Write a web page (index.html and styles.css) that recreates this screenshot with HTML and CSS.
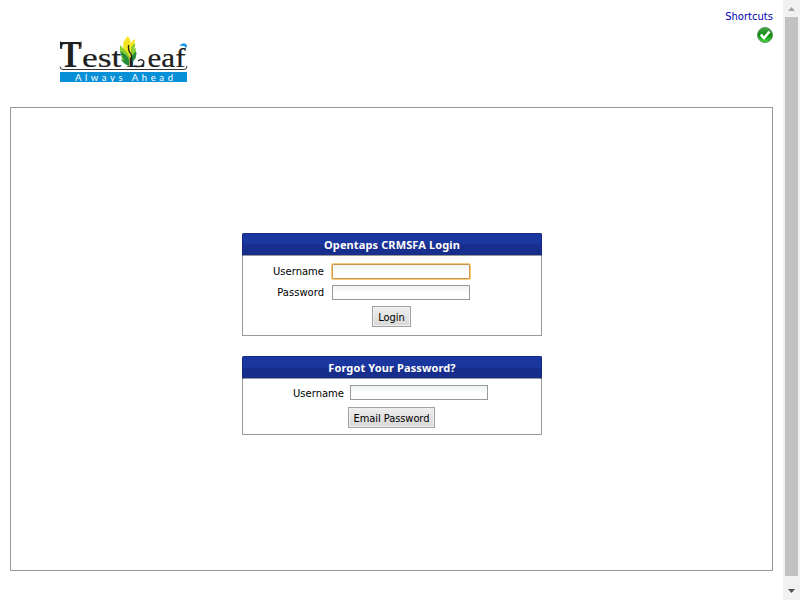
FILE: index.html
```html
<!DOCTYPE html>
<html lang="en">
<head>
<meta charset="utf-8">
<title>Opentaps CRMSFA Login</title>
<link rel="stylesheet" href="styles.css">
</head>
<body>
<div class="page">
  <header class="header">
    <svg class="logo" width="132" height="58" viewBox="58 28 132 58">
      <g class="wordmark">
        <text class="cap" x="60" y="67" textLength="21" lengthAdjust="spacingAndGlyphs">T</text>
        <text x="82" y="67" textLength="39.500" lengthAdjust="spacingAndGlyphs">est</text>
        <text class="ell" x="126" y="67" textLength="20" lengthAdjust="spacingAndGlyphs">L</text>
        <text x="147.500" y="67" textLength="38" lengthAdjust="spacingAndGlyphs">eaf</text>
      </g>
      <path d="M60 41V49L63 44ZM81.500 41V49L79 44Z" fill="#202020"/>
      <path d="M179.500 46Q182 42 186 44Q188 46 186 48Q185 45 179.500 46Z" fill="#1498e6"/>
      <path d="M60 66.500Q60 69.500 63 69.500H184Q187 69.500 187 66" fill="none" stroke="#333"/>
      <path d="M134 66Q143 68 144 62Q142 58 138 61" fill="none" stroke="#202020" stroke-width="1.300"/>
      <path d="M128 36Q121 42 124 50L131 58Q135 51 134 46L135 39Q131 41 130.500 44Q130.500 39 128 36Z" fill="#f4e522"/>
      <path d="M120 45Q119 52 123 56L121 55Q122 63 129 63Q131 56 126 51ZM131 47L135 43Q136 46 134 49L136 48Q136 55 131 60Z" fill="#8dcc2d"/>
      <path d="M120 51Q121 58 129 64Q130 59 126 55ZM136 51Q138 58 131 63L131 57ZM121 59Q123 64 129 66L129 62Z" fill="#238c38"/>
      <path d="M128.500 45Q128 51 131 54Q132.500 58 131 64" fill="none" stroke="#1c241e" stroke-width="1.300"/>
      <rect x="60" y="72" width="127" height="10" fill="#078fd8"/>
      <text class="tagline" x="75" y="80.700" textLength="98">Always Ahead</text>
    </svg>
    <div class="tools">
      <a class="shortcuts">Shortcuts</a>
      <svg class="status" width="16" height="16" viewBox="0 0 16 16">
        <defs><linearGradient id="green" x2="0" y2="1"><stop stop-color="#4ca84b"/><stop offset=".5" stop-color="#078b0d"/><stop offset="1" stop-color="#45dc3c"/></linearGradient></defs>
        <circle cx="8" cy="8" r="7.5" fill="url(#green)" stroke="#5c8e5c"/>
        <path d="M3.800 7.500L7 11L12.500 4.500" fill="none" stroke="#fff" stroke-width="2.600"/>
      </svg>
    </div>
  </header>
  <main class="content">
    <form class="panel login">
      <h2 class="title">Opentaps CRMSFA Login</h2>
      <div class="row"><label for="user">Username</label><input id="user" class="active"></div>
      <div class="row"><label for="pass">Password</label><input id="pass" type="password"></div>
      <button type="button" class="btn-login">Login</button>
    </form>
    <form class="panel forgot">
      <h2 class="title">Forgot Your Password?</h2>
      <div class="row"><label for="mail">Username</label><input id="mail"></div>
      <button type="button" class="btn-email">Email Password</button>
    </form>
  </main>
</div>
<div class="scrollbar">
  <svg width="17" height="17" viewBox="0 0 17 17"><path d="M5 11L8.5 7L12 11Z" fill="#a3a3a3"/></svg>
  <div class="thumb"></div>
  <svg width="17" height="24" viewBox="0 0 17 24"><path d="M5 13L8.5 17L12 13Z" fill="#505050"/></svg>
</div>
</body>
</html>
```
FILE: styles.css
```css
* { box-sizing: border-box; }
body {
  margin: 0;
  height: 600px;
  display: flex;
  overflow: hidden;
  background: #fff;
  color: #000;
  font: 10px/14px "DejaVu Sans", sans-serif;
}
.page { width: 783px; padding: 0 10px; }
.header { height: 107px; display: flex; justify-content: space-between; }
.logo { margin: 28px 0 0 48px; overflow: visible; }
.wordmark { font: 28px "Liberation Serif", serif; fill: #202020; stroke: #202020; stroke-width: .2px; }
.wordmark .cap { font-size: 38px; font-weight: bold; stroke: none; }
.wordmark .ell { font-size: 22px; }
.tagline { font: 9.5px Lato, sans-serif; fill: #fff; }
.tools { padding-top: 10px; display: flex; flex-direction: column; align-items: flex-end; }
.shortcuts { color: #0000b4; }
.status { margin-top: 3px; }
.content {
  height: 464px;
  border: 1px solid #999;
  padding: 125px 0 0 231px;
}
.panel {
  width: 300px;
  border: 1px solid #999;
  border-top: 0;
  border-radius: 2px 2px 0 0;
  display: flex;
  flex-direction: column;
}
.login { height: 103px; margin-bottom: 20px; }
.forgot { height: 79px; }
.title {
  flex: none;
  height: 23px;
  margin: 0 -1px 8px;
  border: 1px solid #15298a;
  border-bottom-color: #999;
  border-radius: 2px 2px 0 0;
  background: linear-gradient(#1a369f 0 45%, #172e8c 55% 100%);
  color: #fff;
  font: bold 11px/22px "Noto Sans", sans-serif;
  letter-spacing: .12px;
  text-align: center;
}
.row { display: flex; height: 15px; margin-bottom: 6px; }
.row label { width: 81px; text-align: right; margin-right: 8px; line-height: 16px; }
.forgot .row label { width: 101px; margin-right: 6px; line-height: 17px; }
.forgot .title { margin-bottom: 6px; }
.forgot .row { margin-bottom: 7px; }
input {
  width: 138px;
  height: 15px;
  padding: 0 2px;
  border: 1px solid #999;
  background: linear-gradient(#edf3f2, #fff 7px);
  outline: none;
}
.active { border-color: #c8964b; box-shadow: 0 0 0 1px #f5ce7d; border-radius: 1px; }
button {
  height: 21px;
  padding: 2px 0 0;
  border: 1px solid #a0a0a0;
  box-shadow: inset 0 0 0 1px #f0f0f0;
  background: linear-gradient(#eee, #d8d8d8);
  color: #000;
  font: 11px/17px "DejaVu Sans Condensed", "DejaVu Sans", sans-serif;
  letter-spacing: -.07px;
}
.btn-login { width: 39px; margin-left: 129px; }
.btn-email { width: 87px; margin-left: 105px; }
.scrollbar { width: 17px; background: #f1f1f1; display: flex; flex-direction: column; }
.scrollbar svg { flex: none; display: block; }
.thumb { flex: 1; margin: 0 2px; background: #c1c1c1; }
```
